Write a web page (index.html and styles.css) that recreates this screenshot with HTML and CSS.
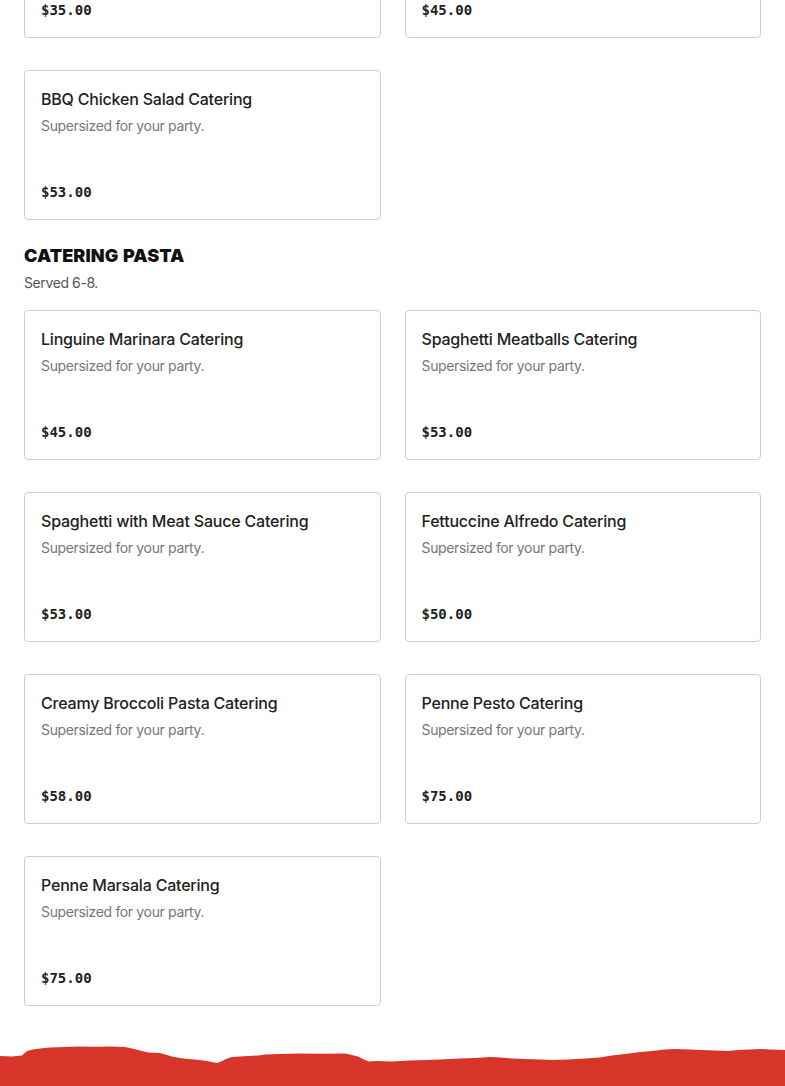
FILE: index.html
```html
<!DOCTYPE html>
<html lang="en">
<head>
<meta charset="utf-8">
<title>Catering Menu</title>
<link rel="stylesheet" href="styles.css">
</head>
<body>
<main class="menu">
  <section class="section section--first">
    <div class="grid">
      <article class="card"><h3 class="card-title">Garden Salad Catering</h3><p class="card-desc">Supersized for your party.</p><p class="card-price">$35.00</p></article>
      <article class="card"><h3 class="card-title">Chopped Salad Catering</h3><p class="card-desc">Supersized for your party.</p><p class="card-price">$45.00</p></article>
      <article class="card"><h3 class="card-title">BBQ Chicken Salad Catering</h3><p class="card-desc">Supersized for your party.</p><p class="card-price">$53.00</p></article>
    </div>
  </section>
  <section class="section">
    <h2 class="section-title">CATERING PASTA</h2>
    <p class="section-sub">Served 6-8.</p>
    <div class="grid">
      <article class="card"><h3 class="card-title">Linguine Marinara Catering</h3><p class="card-desc">Supersized for your party.</p><p class="card-price">$45.00</p></article>
      <article class="card"><h3 class="card-title">Spaghetti Meatballs Catering</h3><p class="card-desc">Supersized for your party.</p><p class="card-price">$53.00</p></article>
      <article class="card"><h3 class="card-title">Spaghetti with Meat Sauce Catering</h3><p class="card-desc">Supersized for your party.</p><p class="card-price">$53.00</p></article>
      <article class="card"><h3 class="card-title">Fettuccine Alfredo Catering</h3><p class="card-desc">Supersized for your party.</p><p class="card-price">$50.00</p></article>
      <article class="card"><h3 class="card-title">Creamy Broccoli Pasta Catering</h3><p class="card-desc">Supersized for your party.</p><p class="card-price">$58.00</p></article>
      <article class="card"><h3 class="card-title">Penne Pesto Catering</h3><p class="card-desc">Supersized for your party.</p><p class="card-price">$75.00</p></article>
      <article class="card"><h3 class="card-title">Penne Marsala Catering</h3><p class="card-desc">Supersized for your party.</p><p class="card-price">$75.00</p></article>
    </div>
  </section>
</main>
<footer class="footer">
  <svg class="footer-edge" viewBox="0 1040 785 24" preserveAspectRatio="none" aria-hidden="true">
    <path fill="#d8352a" d="M0 1056 L12 1056.5 L22 1055.5 L27 1051 L33 1049.5 L40 1048.5 L50 1047.5 L65 1047 L80 1046.4 L95 1046.8 L110 1046.5 L125 1047 L132 1048.5 L140 1050.5 L148 1052.5 L160 1053 L167 1055 L172 1056.5 L180 1058 L188 1059 L195 1059.5 L207 1061 L212 1062 L217 1063 L221 1061.5 L226 1059 L232 1057 L240 1056.5 L248 1056 L258 1055.5 L265 1054.5 L280 1054 L300 1053.5 L320 1053.8 L345 1053.5 L352 1055 L358 1056.5 L364 1059.5 L369 1061.5 L378 1061 L392 1061.5 L410 1060.5 L425 1060 L440 1059.5 L460 1058.5 L475 1058 L490 1057 L500 1057.5 L512 1058.5 L525 1059 L540 1059.5 L552 1060 L568 1059.5 L585 1058.5 L600 1057.5 L612 1055.5 L625 1054 L640 1052 L652 1051 L665 1049.5 L675 1049 L690 1049.5 L700 1050 L715 1050.5 L728 1051 L738 1050 L750 1049.5 L760 1049 L770 1049.5 L785 1050 L785 1064 L0 1064 Z"/>
  </svg>
  <div class="footer-body"></div>
</footer>
</body>
</html>
```

FILE: styles.css
```css
* { box-sizing: border-box; }

html, body {
  margin: 0;
  padding: 0;
  background: #ffffff;
  overflow: hidden;
}

body {
  font-family: Inter, "Noto Sans", "Liberation Sans", sans-serif;
  color: #222222;
}

.menu {
  padding: 0 24px;
  margin-top: -112px;
}

.section--first {
  margin-bottom: 24px;
}

.section-title {
  margin: 0;
  font-family: Inter, "Liberation Sans", sans-serif;
  font-weight: 900;
  font-size: 18px;
  line-height: 24px;
  letter-spacing: 0.1px;
  word-spacing: 1px;
  color: #111111;
}

.section-sub {
  margin: 5px 0 17px;
  font-size: 14px;
  line-height: 20px;
  letter-spacing: -0.4px;
  color: #555555;
}

.grid {
  display: grid;
  grid-template-columns: 1fr 1fr;
  column-gap: 24px;
  row-gap: 32px;
}

.card {
  display: flex;
  flex-direction: column;
  min-height: 150px;
  padding: 16px 16px 17px;
  border: 1px solid #cfcfcf;
  border-radius: 4px;
  background: #ffffff;
}

.card-title {
  margin: 0;
  font-size: 16px;
  line-height: 24px;
  font-weight: 500;
  letter-spacing: -0.2px;
  color: #222222;
}

.card-desc {
  margin: 5px 0 0;
  font-size: 14px;
  line-height: 20px;
  letter-spacing: -0.35px;
  color: #777777;
}

.card-price {
  margin: auto 0 0;
  font-family: "DejaVu Sans Mono", "Liberation Mono", monospace;
  font-weight: 700;
  font-size: 14px;
  line-height: 20px;
  color: #222222;
}

.footer {
  margin-top: 34px;
}

.footer-edge {
  display: block;
  width: 100%;
  height: 24px;
}

.footer-edge + .footer-body {
  margin-top: -1px;
}

.footer-body {
  height: 60px;
  background: #d8352a;
}
```
